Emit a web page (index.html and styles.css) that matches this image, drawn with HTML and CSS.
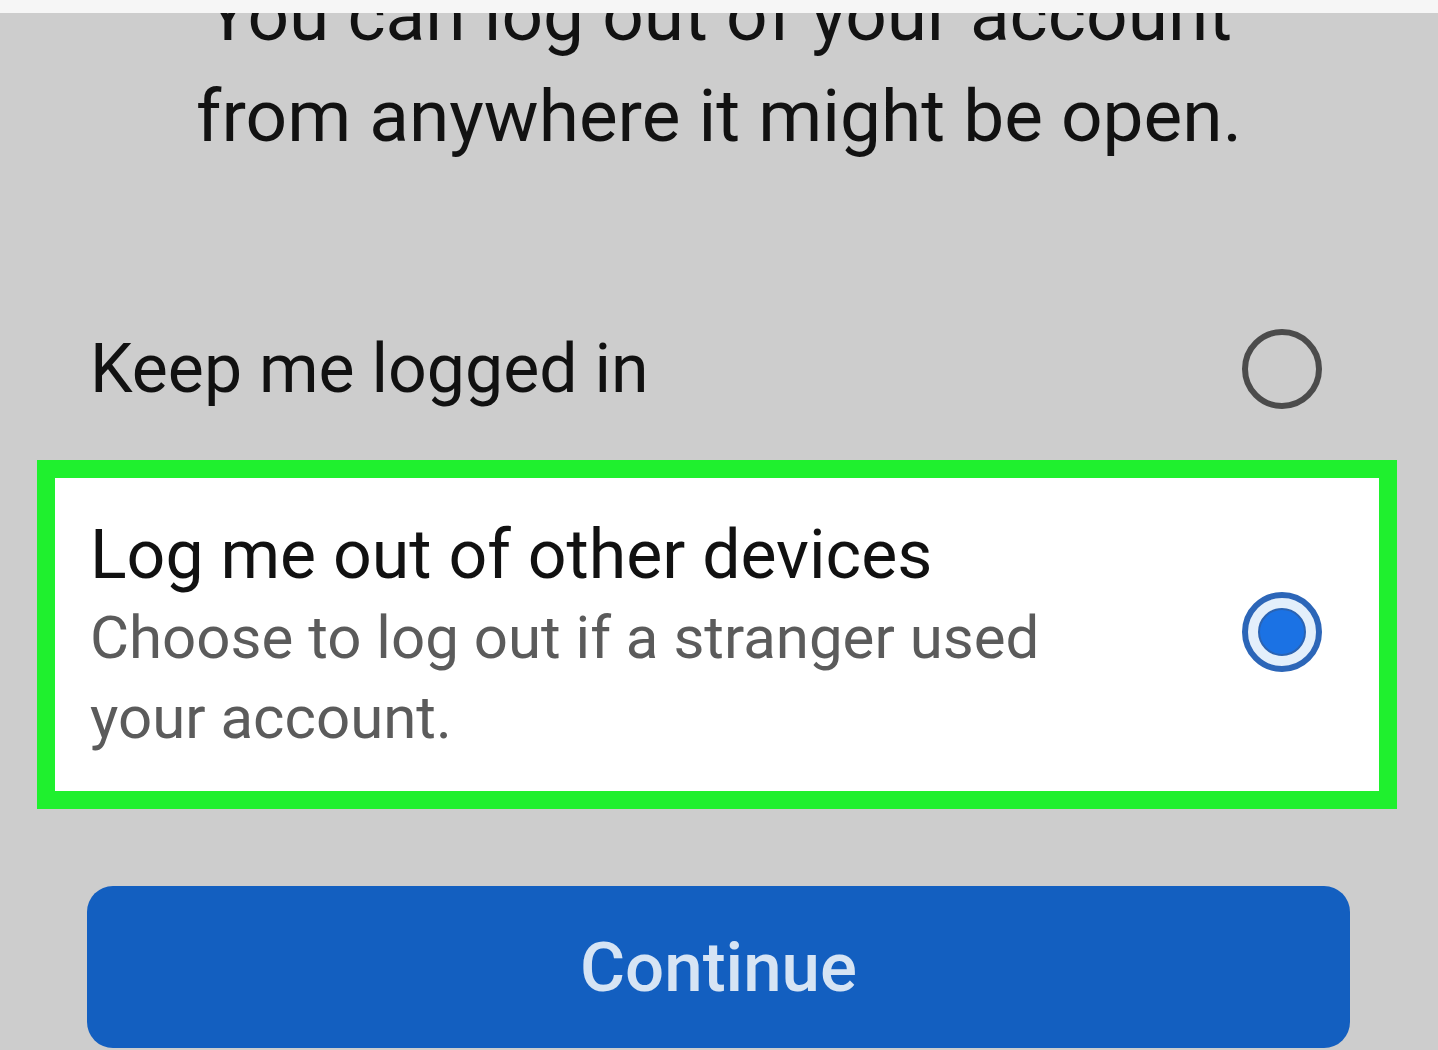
FILE: index.html
```html
<!DOCTYPE html>
<html>
    <head>
        <title>Log out of other devices</title>
        <link rel="stylesheet" href="styles.css">
    </head>
    <body>
        <div class="top-strip"></div>
        <div class="screen">
            <p class="intro">You can log out of your account from anywhere it might be open.</p>

            <div class="option keep-option">
                <div class="option-text">
                    <div class="option-title">Keep me logged in</div>
                </div>
                <svg class="radio" width="84" height="84" viewBox="0 0 84 84">
                    <circle cx="42" cy="42" r="37" fill="none" stroke="#4b4b4b" stroke-width="6"/>
                </svg>
            </div>

            <div class="highlight">
                <div class="option">
                    <div class="option-text">
                        <div class="option-title">Log me out of other devices</div>
                        <div class="option-desc">Choose to log out if a stranger used your account.</div>
                    </div>
                    <svg class="radio radio-checked" width="84" height="84" viewBox="0 0 84 84">
                        <circle cx="42" cy="42" r="34" fill="#e3effb"/>
                        <circle cx="42" cy="42" r="37" fill="none" stroke="#2c66b8" stroke-width="6"/>
                        <circle cx="42" cy="42" r="23" fill="#1b72e4" stroke="#2a63b3" stroke-width="2"/>
                    </svg>
                </div>
            </div>

            <div class="continue-button">Continue</div>
        </div>
    </body>
</html>
```

FILE: styles.css
```css
body {
    margin: 0;
    background-color: #cdcdcd;
    font-family: Roboto, "Noto Sans", sans-serif;
    color: #111111;
}

.top-strip {
    height: 13px;
    background-color: #f6f6f6;
}

.screen {
    height: 1037px;
    overflow: hidden;
}

.intro {
    margin: -48px auto 0;
    width: 1100px;
    text-align: center;
    font-size: 73px;
    line-height: 101px;
    color: #121212;
}

.option {
    display: flex;
    align-items: center;
    justify-content: space-between;
}

.keep-option {
    margin-top: 160px;
    padding: 0 114px 0 90px;
}

.option-title {
    font-size: 68px;
    line-height: 80px;
    color: #111111;
}

.option-desc {
    width: 1000px;
    margin-top: 3px;
    font-size: 60px;
    line-height: 80px;
    color: #5b5b5b;
}

.radio {
    flex-shrink: 0;
}

.radio-checked {
    margin-bottom: 10px;
}

.highlight {
    margin: 49px 41px 0 37px;
    border: 18px solid #1ff02e;
    background-color: #ffffff;
    padding: 37px 55px 33px 35px;
}

.continue-button {
    margin: 77px 0 0 87px;
    width: 1263px;
    height: 162px;
    border-radius: 26px;
    background-color: #135fc0;
    color: #d6e4f4;
    font-size: 69px;
    font-weight: 500;
    display: flex;
    align-items: center;
    justify-content: center;
}
```
